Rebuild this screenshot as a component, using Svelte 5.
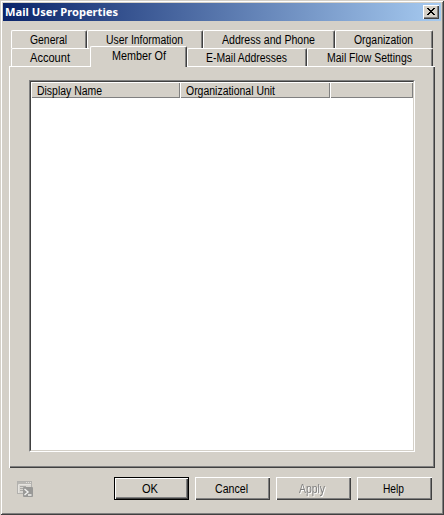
<script>
  const upper = [
    { name: 'General', w: 76, t: 37 },
    { name: 'User Information', w: 116, t: 77 },
    { name: 'Address and Phone', w: 132, t: 93 },
    { name: 'Organization', w: 98, t: 59 }
  ];
  const lower = [
    { name: 'Account', w: 79, t: 40, covered: true },
    { name: 'Member Of', w: 97, t: 54, active: true },
    { name: 'E-Mail Addresses', w: 120, t: 81 },
    { name: 'Mail Flow Settings', w: 126, t: 85 }
  ];
  const columns = [
    { name: 'Display Name', w: 149, t: 65 },
    { name: 'Organizational Unit', w: 150, t: 89 },
    { name: '', w: 83, t: 0 }
  ];
  const buttons = [
    { name: 'OK', t: 16, primary: true },
    { name: 'Cancel', t: 33 },
    { name: 'Apply', t: 26, disabled: true },
    { name: 'Help', t: 21 }
  ];
</script>

{#snippet label(text, width)}
  <svg class="label" {width} height="14" aria-label={text}>
    <text x="0" y="11" textLength={width} lengthAdjust="spacingAndGlyphs">{text}</text>
  </svg>
{/snippet}

<div class="window">
  <header>
    <svg class="title" width="114" height="18"><text x="0" y="13" textLength="113" lengthAdjust="spacingAndGlyphs">Mail User Properties</text></svg>
    <button class="close" aria-label="Close">
      <svg width="8" height="7" shape-rendering="crispEdges"><path d="M0 0h2v1h1v1h2V1h1V0h2v1H7v1H6v1H5v1h1v1h1v1h1v1H6V6H5V5H3v1H2v1H0V6h1V5h1V4h1V3H2V2H1V1H0z" /></svg>
    </button>
  </header>

  <nav>
    <div class="row">
      {#each upper as tab}
        <div class="tab" style:width="{tab.w}px">{@render label(tab.name, tab.t)}</div>
      {/each}
    </div>
    <div class="row">
      {#each lower as tab}
        <div class="tab" class:active={tab.active} class:covered={tab.covered} style:width="{tab.w}px">{@render label(tab.name, tab.t)}</div>
      {/each}
    </div>
  </nav>

  <main>
    <div class="list">
      <div class="inner">
        <div class="head">
          {#each columns as col}
            <div class="col" style:width="{col.w}px">{#if col.name}{@render label(col.name, col.t)}{/if}</div>
          {/each}
        </div>
      </div>
    </div>
  </main>

  <footer>
    <svg class="script" width="17" height="17" viewBox="0 0 17 17">
      <rect x=".5" y=".5" width="14" height="12" fill="#d8d6d1" stroke="#b2b1ae" />
      <path d="M1 1h13v2H1z" fill="#b8b7b3" />
      <path d="M9 1.500h1M11 1.500h1M13 1.500h1" stroke="#e2e0dc" />
      <path d="M1.500 4v8M2 3.500h12" stroke="#e6e4e0" />
      <path d="M3 5.500h6M3 7.500h4M3 9.500h3" stroke="#aaa9a6" />
      <rect x="6" y="6" width="10" height="10" rx="1" fill="#999997" />
      <path d="M7.500 8l3.500 3-3.500 3M11 14h3.500" fill="none" stroke="#f2f2f0" stroke-width="1.400" />
    </svg>
    <div class="buttons">
      {#each buttons as b}
        <button class="push" class:primary={b.primary} class:off={b.disabled} disabled={b.disabled}>
          <span class="face">{@render label(b.name, b.t)}</span>
        </button>
      {/each}
    </div>
  </footer>
</div>

<style>
  :global(body) { margin: 0; background: #d4d0c8; }
  .window, .window * { box-sizing: border-box; }
  .window {
    width: 444px; height: 515px; padding: 3px;
    display: flex; flex-direction: column;
    background: #d4d0c8;
    box-shadow: inset 1px 1px #d4d0c8, inset -1px -1px #404040, inset 2px 2px #fff, inset -2px -2px #808080;
    font: 12px "Liberation Sans", Arial, sans-serif;
    overflow: hidden;
  }
  svg { display: block; flex: none; }
  .label { overflow: visible; fill: #000; }
  button { appearance: none; border: 0; padding: 0; margin: 0; border-radius: 0; background: #d4d0c8; font: inherit; }
  header {
    height: 18px; flex: none; display: flex; justify-content: space-between;
    padding: 2px 2px 0 2px;
    background: linear-gradient(90deg, #0a246a, #a6caf0);
  }
  .title { margin-top: -2px; fill: #fff; font: bold 11px "Noto Sans", "Open Sans", sans-serif; }
  .close {
    width: 16px; height: 14px; display: flex; padding: 3px 0 0 4px;
    box-shadow: inset 1px 1px #fff, inset -1px -1px #404040, inset -2px -2px #808080;
  }
  nav { padding: 9px 0 0 8px; flex: none; }
  .row { display: flex; height: 18px; }
  .tab {
    height: 18px; display: flex; justify-content: center; padding: 2px 2px 0 0;
    border-top: 1px solid #fff; border-left: 1px solid #fff; border-right: 1px solid #404040;
    box-shadow: inset -1px 0 #808080;
    border-radius: 2px 2px 0 0;
  }
  .covered { padding-right: 1px; border-right-color: #d4d0c8; box-shadow: none; border-top-right-radius: 0; }
  .active { height: 21px; margin-top: -2px; padding-right: 0; z-index: 1; background: #d4d0c8; }
  main {
    width: 426px; height: 402px; margin-left: 6px; padding: 14px 0 0 20px; flex: none;
    box-shadow: inset 1px 1px #fff, inset -1px -1px #404040, inset -2px -2px #808080;
  }
  .list {
    width: 386px; height: 372px;
    border: 1px solid; border-color: #808080 #fff #fff #808080;
  }
  .inner {
    height: 370px; background: #fff;
    border: 1px solid; border-color: #404040 #d4d0c8 #d4d0c8 #404040;
  }
  .head { display: flex; height: 16px; }
  .col {
    flex: none; height: 16px; padding: 2px 0 0 6px; background: #d4d0c8;
    box-shadow: inset 1px 1px #fff, inset -1px -1px #808080;
  }
  .col:last-child { flex: 1; }
  footer { display: flex; padding: 9px 9px 0 14px; justify-content: space-between; }
  .script { margin-top: 4px; }
  .buttons { display: flex; gap: 6px; }
  .push { width: 75px; height: 23px; }
  .face {
    display: flex; justify-content: center; width: 100%; height: 100%; padding: 5px 3px 0 0;
    box-shadow: inset 1px 1px #fff, inset -1px -1px #404040, inset -2px -2px #808080;
  }
  .primary { border: 1px solid #000; }
  .primary .face { padding-top: 4px; }
  .off .label { fill: #808080; filter: drop-shadow(1px 1px 0 #fff); }
</style>
